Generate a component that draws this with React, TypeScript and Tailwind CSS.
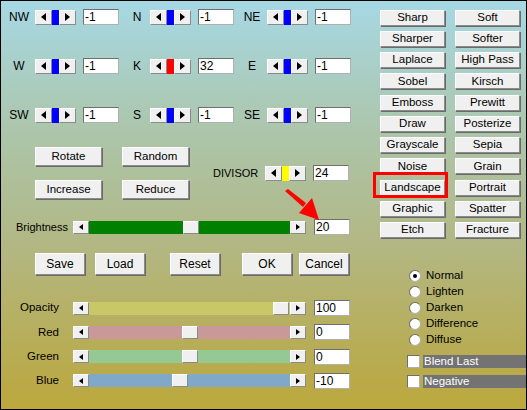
import React from 'react';

const raised =
  'bg-[#f0f0f0] border border-t-white border-l-white border-r-[#8a8a8a] border-b-[#8a8a8a]';
const sunken =
  'bg-white border border-t-[#6f6f6f] border-l-[#6f6f6f] border-r-[#b0b0b0] border-b-[#b0b0b0]';

const Tri: React.FC<{ dir: 'left' | 'right'; small?: boolean }> = ({ dir, small }) => {
  const w = small ? 4 : 5;
  const h = small ? 6 : 8;
  return (
    <svg width={w} height={h} viewBox={`0 0 ${w} ${h}`}>
      <polygon
        points={dir === 'left' ? `${w},0 0,${h / 2} ${w},${h}` : `0,0 ${w},${h / 2} 0,${h}`}
        fill="#000"
      />
    </svg>
  );
};

const ValueBox: React.FC<{ value: string; className?: string }> = ({ value, className = '' }) => (
  <div className={`${sunken} h-[16px] w-[36px] flex items-center pl-[1px] text-[12px] leading-none ${className}`}>
    {value}
  </div>
);

const Spinner: React.FC<{ color: string }> = ({ color }) => (
  <div className="flex h-[15px] w-[41px]">
    <div className={`${raised} w-[17px] flex items-center justify-center`}>
      <Tri dir="left" />
    </div>
    <div className={`w-[7px] ${color}`} />
    <div className={`${raised} w-[17px] flex items-center justify-center`}>
      <Tri dir="right" />
    </div>
  </div>
);

interface Cell {
  label: string;
  value: string;
  color: string;
  gap: string;
}

const KernelCell: React.FC<Cell> = ({ label, value, color, gap }) => (
  <div className="flex items-center h-[16px]">
    <span className="w-[20px] text-center text-[12px]">{label}</span>
    <div className={gap}>
      <Spinner color={color} />
    </div>
    <ValueBox value={value} className="ml-[7px]" />
  </div>
);

const kernelRows: Cell[][] = [
  [
    { label: 'NW', value: '-1', color: 'bg-[#0000ff]', gap: 'ml-[6px]' },
    { label: 'N', value: '-1', color: 'bg-[#0000ff]', gap: 'ml-[3px]' },
    { label: 'NE', value: '-1', color: 'bg-[#0000ff]', gap: 'ml-[5px]' },
  ],
  [
    { label: 'W', value: '-1', color: 'bg-[#0000ff]', gap: 'ml-[6px]' },
    { label: 'K', value: '32', color: 'bg-[#ff0000]', gap: 'ml-[3px]' },
    { label: 'E', value: '-1', color: 'bg-[#0000ff]', gap: 'ml-[5px]' },
  ],
  [
    { label: 'SW', value: '-1', color: 'bg-[#0000ff]', gap: 'ml-[6px]' },
    { label: 'S', value: '-1', color: 'bg-[#0000ff]', gap: 'ml-[3px]' },
    { label: 'SE', value: '-1', color: 'bg-[#0000ff]', gap: 'ml-[5px]' },
  ],
];

const Slider: React.FC<{ fill: string; thumb: string }> = ({ fill, thumb }) => (
  <div className="flex h-[13px] w-[233px]">
    <div className={`${raised} w-[16px] flex items-center justify-center`}>
      <Tri dir="left" small />
    </div>
    <div className={`flex-1 ${fill}`}>
      <div className={`${raised} h-[13px] w-[16px] ${thumb}`} />
    </div>
    <div className={`${raised} w-[16px] flex items-center justify-center`}>
      <Tri dir="right" small />
    </div>
  </div>
);

const Btn: React.FC<{ label: string; className?: string }> = ({ label, className = '' }) => (
  <button
    className={`${raised} shadow-[1px_1px_0_#6a6a6a] flex items-center justify-center leading-none ${className}`}
  >
    {label}
  </button>
);

const colorSliders = [
  { label: 'Opacity', value: '100', fill: 'bg-[#c8c866]', thumb: 'ml-[184px]' },
  { label: 'Red', value: '0', fill: 'bg-[#c99899]', thumb: 'ml-[93px]' },
  { label: 'Green', value: '0', fill: 'bg-[#95c893]', thumb: 'ml-[93px]' },
  { label: 'Blue', value: '-10', fill: 'bg-[#80a8c8]', thumb: 'ml-[83px]' },
];

const filters = [
  ['Sharp', 'Soft'],
  ['Sharper', 'Softer'],
  ['Laplace', 'High Pass'],
  ['Sobel', 'Kirsch'],
  ['Emboss', 'Prewitt'],
  ['Draw', 'Posterize'],
  ['Grayscale', 'Sepia'],
  ['Noise', 'Grain'],
  ['Landscape', 'Portrait'],
  ['Graphic', 'Spatter'],
  ['Etch', 'Fracture'],
];

const modes = ['Normal', 'Lighten', 'Darken', 'Difference', 'Diffuse'];

const App: React.FC = () => {
  return (
    <div className="relative w-[527px] h-[410px] overflow-hidden border border-black bg-[linear-gradient(180deg,#a6d8e4_0%,#acc5a9_33%,#b2b783_60%,#bba73c_100%)] flex font-['Liberation_Sans',Arial,sans-serif] text-[11px] text-black">
      {/* Left panel */}
      <div className="w-[368px] flex flex-col pt-[8px]">
        <div className="flex flex-col gap-[33px]">
          {kernelRows.map((row, i) => (
            <div key={i} className="flex ml-[8px] gap-[8px]">
              {row.map((c) => (
                <KernelCell key={c.label} {...c} />
              ))}
            </div>
          ))}
        </div>

        <div className="flex mt-[24px] ml-[34px]">
          <div className="grid grid-cols-[67px_67px] gap-x-[20px] gap-y-[14px]">
            <Btn label="Rotate" className="h-[19px] text-[11.5px]" />
            <Btn label="Random" className="h-[19px] text-[11.5px]" />
            <Btn label="Increase" className="h-[19px] text-[11.5px]" />
            <Btn label="Reduce" className="h-[19px] text-[11.5px]" />
          </div>
          <div className="flex items-center self-center ml-[24px]">
            <span className="w-[52px] text-[11px]">DIVISOR</span>
            <Spinner color="bg-[#ffff00]" />
            <ValueBox value="24" className="ml-[7px]" />
          </div>
        </div>

        <div className="flex items-center mt-[20px] h-[16px]">
          <span className="ml-[15px] w-[57px]">Brightness</span>
          <Slider fill="bg-[#008000]" thumb="ml-[94px]" />
          <ValueBox value="20" className="ml-[8px] w-[35px]" />
        </div>

        <div className="flex mt-[18px] ml-[34px] text-[12px]">
          <Btn label="Save" className="w-[50px] h-[22px]" />
          <Btn label="Load" className="w-[50px] h-[22px] ml-[10px]" />
          <Btn label="Reset" className="w-[50px] h-[22px] ml-[25px]" />
          <Btn label="OK" className="w-[50px] h-[22px] ml-[22px]" />
          <Btn label="Cancel" className="w-[50px] h-[22px] ml-[7px]" />
        </div>

        <div className="flex flex-col mt-[25px] gap-[8.3px]">
          {colorSliders.map((s) => (
            <div key={s.label} className="flex items-center h-[16px]">
              <span className="w-[58px] text-right text-[11.5px]">{s.label}</span>
              <div className="ml-[14px]">
                <Slider fill={s.fill} thumb={s.thumb} />
              </div>
              <ValueBox value={s.value} className="ml-[8px] w-[35px]" />
            </div>
          ))}
        </div>
      </div>

      {/* Right panel */}
      <div className="flex-1 flex flex-col pt-[8.5px]">
        <div className="ml-[11px] grid grid-cols-[65px_65px] auto-rows-[16px] gap-x-[10px] gap-y-[5.25px]">
          {filters.flat().map((f) => (
            <div key={f} className="relative">
              <Btn label={f} className="w-full h-full text-[11.5px]" />
              {f === 'Landscape' && (
                <span className="absolute -left-[7px] -right-[3px] -top-[7.5px] -bottom-[2.5px] border-[3px] border-[#ff0000]" />
              )}
            </div>
          ))}
        </div>

        <div className="flex flex-col mt-[30px] ml-[40px]">
          {modes.map((m, i) => (
            <div key={m} className="flex items-center h-[16px]">
              <span className={`${sunken} w-[12px] h-[12px] rounded-full flex items-center justify-center`}>
                {i === 0 && <span className="w-[4px] h-[4px] rounded-full bg-black" />}
              </span>
              <span className="ml-[5px] text-[11.5px]">{m}</span>
            </div>
          ))}
        </div>

        {['Blend Last', 'Negative'].map((c) => (
          <div key={c} className="flex items-center h-[13px] mt-[7px] ml-[38px]">
            <span className={`${sunken} w-[13px] h-[13px] shrink-0`} />
            <span className="ml-[3px] flex-1 h-[13px] bg-[#737373] text-white text-[11.5px] leading-[13px] pl-[1px]">
              {c}
            </span>
          </div>
        ))}
      </div>

      {/* Red pointer arrow */}
      <svg className="absolute left-0 top-0 pointer-events-none" width="527" height="410">
        <polygon points="284,190 287,188 305,202 302,206" fill="#ff0000" />
        <polygon points="318,219 298,212 311,197" fill="#ff0000" />
      </svg>
    </div>
  );
};

export default App;
